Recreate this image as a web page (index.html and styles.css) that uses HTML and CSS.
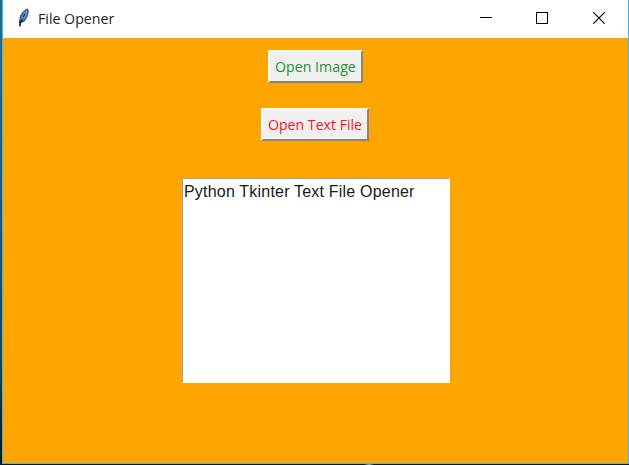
FILE: index.html
```html
<!DOCTYPE html>
<html lang="en">
<head>
<meta charset="utf-8">
<title>File Opener</title>
<link rel="stylesheet" href="styles.css">
</head>
<body>
<div class="window">
  <header class="titlebar">
    <svg class="feather" width="16" height="20" viewBox="0 0 16 20">
      <path d="M3.300 17.500 3 13.500 4 8 6.500 4 10 1 12 .8 12.800 3.500 11.500 9 8.500 13.500 5.200 15 4.600 18.500Z" fill="#38506e"/>
      <path d="M4.500 12 5.600 8 8 4 10.500 2 11.600 4 10.300 9 7.500 12.500Z" fill="#5b94d6"/>
      <path d="M3.900 18.500 4.700 14 7 10.500M7.300 9 8.800 6" fill="none" stroke="#171e29" stroke-width="1.200"/>
      <path d="M9 1.500 11.500 .8" stroke="#999" stroke-width="1"/>
    </svg>
    <h1 class="title"><span class="fit">File Opener</span></h1>
    <div class="controls">
      <svg class="control" width="12" height="12" viewBox="0 0 12 12" shape-rendering="crispEdges"><path d="M0 5.500H12" stroke="#000"/></svg>
      <svg class="control" width="12" height="12" viewBox="0 0 12 12" shape-rendering="crispEdges"><rect x=".5" y=".5" width="11" height="11" fill="none" stroke="#000"/></svg>
      <svg class="control" width="12" height="12" viewBox="0 0 12 12"><path d="M.3 .3 11.700 11.700M11.700 .3 .3 11.700" stroke="#000" stroke-width="1.200"/></svg>
    </div>
  </header>
  <main class="content">
    <button class="button image"><span class="fit">Open Image</span></button>
    <button class="button file"><span class="fit">Open Text File</span></button>
    <div class="textbox"><span class="fit">Python Tkinter Text File Opener</span></div>
  </main>
</div>
</body>
</html>
```
FILE: styles.css
```css
* { box-sizing: border-box; }
body {
  margin: 0;
  width: 629px;
  height: 465px;
  padding: 0 0 1px 2px;
  overflow: hidden;
  background: linear-gradient(#1c7384, #124c5d 75%, #061820) 0 0 / 2px 464px no-repeat,
    radial-gradient(circle at 369px 464px, #75b5cc 0, #0b1720 5px);
}
.window {
  display: flex;
  flex-direction: column;
  height: 464px;
  border: 1px solid #4fb1ec;
  border-top: 0;
  background: #ffa500;
}
.titlebar {
  display: flex;
  align-items: center;
  height: 38px;
  padding: 0 23px 2px 13px;
  background: #fff;
}
.feather { margin-top: -1px; }
.title {
  margin: 0 auto 0 6px;
  font: 15px/20px "Open Sans", sans-serif;
  color: #222;
}
.fit { display: inline-block; white-space: nowrap; transform-origin: 0 50%; }
.title .fit { transform: scaleX(.945); }
.controls { display: flex; gap: 45px; }
.control { display: block; }
.control:first-child { margin-right: -1px; }
.content {
  display: flex;
  flex-direction: column;
  align-items: center;
  padding-top: 12px;
}
.button {
  display: block;
  height: 33px;
  padding: 0 0 0 5px;
  border: 2px solid;
  border-color: #fafafa #858585 #858585 #fafafa;
  background: #f0f0f0;
  font: 15px/24px "Open Sans", sans-serif;
  text-align: left;
}
.button .fit { display: block; margin-top: -2px; }
.image { width: 95px; margin-right: 1px; color: #229333; }
.file { width: 108px; margin: 25px 1px 37px 0; color: #ff1020; }
.image .fit { transform: scaleX(.947); }
.file .fit { transform: scaleX(.941); }
.textbox {
  width: 268px;
  height: 205px;
  margin-left: 1px;
  padding: 3px 1px;
  border: 1px solid;
  border-color: #a0a0a0 #fff #fff #a0a0a0;
  background: #fff;
  font: 16px/20px "Liberation Sans", sans-serif;
  letter-spacing: .2px;
  color: #181818;
}
```
